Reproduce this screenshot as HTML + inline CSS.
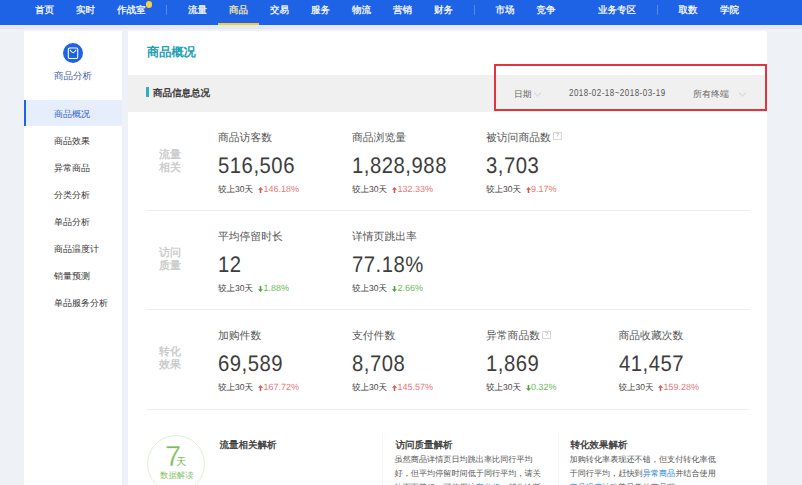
<!DOCTYPE html>
<html><head><meta charset="utf-8">
<style>
*{margin:0;padding:0;box-sizing:border-box}
html,body{width:802px;height:485px;overflow:hidden;background:#eef1f6;font-family:"Liberation Sans",sans-serif;color:#333;text-rendering:geometricPrecision}
.a{position:absolute;white-space:nowrap}
#nav{position:absolute;left:0;top:0;width:802px;height:25px;background:#1e62e6}
#nav .i{position:absolute;top:2.5px;font-size:9.5px;line-height:16px;color:#fff;-webkit-text-stroke:0.25px currentColor}
#nav .sep{position:absolute;top:5px;width:1px;height:10px;background:#5b88e8}
#side{position:absolute;left:24px;top:31px;width:98px;height:460px;background:#fff}
#main{position:absolute;left:128px;top:31px;width:639px;height:460px;background:#fff}
.si{position:absolute;left:0;width:98px;height:27px;font-size:9px;line-height:30px;color:#333;padding-left:30px}
.lbl{font-size:10.8px;line-height:14px;color:#555}
.big{font-size:22.5px;line-height:24px;color:#3d3d3d;letter-spacing:0.6px;transform:scaleX(0.9);transform-origin:0 0}
.cmp{font-size:8.5px;line-height:12px;color:#444}
.pct{font-size:9px;line-height:12px}
.up{color:#e87878}
.dn{color:#6dbd5d}
.grp{font-size:11px;line-height:13px;color:#c8c8c8;-webkit-text-stroke:0.3px #c8c8c8}
.hl{position:absolute;left:146px;width:603px;height:1px;background:#efefef}
.q{position:absolute;width:9px;height:8px;border:1px solid #d8d8d8;font-size:6px;line-height:6px;text-align:center;color:#aaa}
.body{font-size:8.15px;line-height:14.2px;color:#555;white-space:normal;width:150px}
.lk{color:#2e86d8}
.tt{font-size:9.5px;line-height:14px;color:#3a3a3a;-webkit-text-stroke:0.35px #3a3a3a}
</style></head><body>
<div id="nav">
  <span class="i" style="left:35px">首页</span>
  <span class="i" style="left:76px">实时</span>
  <span class="i" style="left:117px">作战室</span>
  <span style="position:absolute;left:146px;top:1.3px;width:6.3px;height:6.3px;border-radius:50%;background:#f5d33f"></span>
  <span class="sep" style="left:166px"></span>
  <span class="i" style="left:188px">流量</span>
  <span class="i" style="left:229px;color:#f6e7a6">商品</span>
  <span style="position:absolute;left:218px;top:23px;width:41px;height:2.5px;background:#f0cc3a"></span>
  <span class="i" style="left:270px">交易</span>
  <span class="i" style="left:311px">服务</span>
  <span class="i" style="left:352px">物流</span>
  <span class="i" style="left:393px">营销</span>
  <span class="i" style="left:434px">财务</span>
  <span class="sep" style="left:474px"></span>
  <span class="i" style="left:495.5px">市场</span>
  <span class="i" style="left:536.5px">竞争</span>
  <span class="i" style="left:598px">业务专区</span>
  <span class="sep" style="left:657px"></span>
  <span class="i" style="left:678.5px">取数</span>
  <span class="i" style="left:720px">学院</span>
</div>

<div class="a" style="left:0;top:25px;width:802px;height:3.5px;background:#e5e8ee"></div>
<div id="side">
  <svg style="position:absolute;left:39px;top:11.5px" width="20" height="21" viewBox="0 0 20 21">
    <circle cx="10" cy="10" r="10" fill="#1e62e6"/>
    <rect x="5.3" y="5" width="9.4" height="10.5" rx="1.2" fill="none" stroke="#fff" stroke-width="1.1"/>
    <path d="M7 6.8 Q10 12.6 13.1 6.8" fill="none" stroke="#fff" stroke-width="1.1"/>
  </svg>
  <div class="a" style="left:30px;top:37.5px;font-size:9.5px;line-height:16px;color:#4662a8">商品分析</div>
  <div class="si" style="top:68.5px;background:#e6eefb;color:#3563c8;border-left:2px solid #1e62e6;padding-left:28px;height:26px;line-height:28.5px">商品概况</div>
  <div class="si" style="top:95px">商品效果</div>
  <div class="si" style="top:122px">异常商品</div>
  <div class="si" style="top:149px">分类分析</div>
  <div class="si" style="top:176px">单品分析</div>
  <div class="si" style="top:203px">商品温度计</div>
  <div class="si" style="top:230px">销量预测</div>
  <div class="si" style="top:257px">单品服务分析</div>
</div>

<div id="main"></div>
<div class="a" style="left:147px;top:43px;font-size:12.2px;line-height:18px;color:#22a0b4;font-weight:bold">商品概况</div>
<div class="a" style="left:128px;top:75px;width:639px;height:37px;background:#f0f0f0"></div>
<div class="a" style="left:146px;top:87px;width:2.5px;height:10px;background:#2ab0c0"></div>
<div class="a tt" style="left:153px;top:87px;color:#333;-webkit-text-stroke:0.35px #333">商品信息总况</div>
<div class="a" style="left:514px;top:86.8px;font-size:8.8px;line-height:14px;color:#666">日期</div>
<svg class="a" style="left:533px;top:92px" width="9" height="5" viewBox="0 0 9 5"><path d="M1 0.8 L4.5 4 L8 0.8" fill="none" stroke="#c8c8c8" stroke-width="0.9"/></svg>
<div class="a" style="left:569px;top:86.5px;font-size:10px;line-height:14px;color:#555;letter-spacing:0.6px;transform:scaleX(0.8);transform-origin:0 0">2018-02-18~2018-03-19</div>
<div class="a" style="left:693px;top:87px;font-size:9px;line-height:14px;color:#666">所有终端</div>
<svg class="a" style="left:738px;top:92px" width="9" height="5" viewBox="0 0 9 5"><path d="M1 0.8 L4.5 4 L8 0.8" fill="none" stroke="#c8c8c8" stroke-width="0.9"/></svg>
<div class="a" style="left:494px;top:64px;width:273px;height:47px;border:2px solid #e2343c"></div>

<!-- row 1 -->
<div class="a grp" style="left:159px;top:148.5px">流量<br>相关</div>
<div class="a lbl" style="left:218px;top:131px">商品访客数</div>
<div class="a big" style="left:218px;top:154px">516,506</div>
<div class="a cmp" style="left:218px;top:183px">较上30天</div>
<div class="a pct up" style="left:258px;top:183px"><svg width="5" height="6" viewBox="0 0 5 6" style="vertical-align:-1px;margin-right:0.5px"><path d="M2.5 0 L5 2.8 L3.3 2.8 L3.3 6 L1.7 6 L1.7 2.8 L0 2.8Z" fill="#e25555"/></svg>146.18%</div>
<div class="a lbl" style="left:352px;top:131px">商品浏览量</div>
<div class="a big" style="left:352px;top:154px">1,828,988</div>
<div class="a cmp" style="left:352px;top:183px">较上30天</div>
<div class="a pct up" style="left:392px;top:183px"><svg width="5" height="6" viewBox="0 0 5 6" style="vertical-align:-1px;margin-right:0.5px"><path d="M2.5 0 L5 2.8 L3.3 2.8 L3.3 6 L1.7 6 L1.7 2.8 L0 2.8Z" fill="#e25555"/></svg>132.33%</div>
<div class="a lbl" style="left:486px;top:131px">被访问商品数</div>
<div class="q" style="left:553px;top:132px">?</div>
<div class="a big" style="left:486px;top:154px">3,703</div>
<div class="a cmp" style="left:486px;top:183px">较上30天</div>
<div class="a pct up" style="left:525.5px;top:183px"><svg width="5" height="6" viewBox="0 0 5 6" style="vertical-align:-1px;margin-right:0.5px"><path d="M2.5 0 L5 2.8 L3.3 2.8 L3.3 6 L1.7 6 L1.7 2.8 L0 2.8Z" fill="#e25555"/></svg>9.17%</div>
<div class="hl" style="top:210px"></div>

<!-- row 2 -->
<div class="a grp" style="left:159px;top:247px">访问<br>质量</div>
<div class="a lbl" style="left:218px;top:230px">平均停留时长</div>
<div class="a big" style="left:218px;top:253px">12</div>
<div class="a cmp" style="left:218px;top:282px">较上30天</div>
<div class="a pct dn" style="left:258px;top:282px"><svg width="5" height="6" viewBox="0 0 5 6" style="vertical-align:-1px;margin-right:0.5px"><path d="M2.5 6 L5 3.2 L3.3 3.2 L3.3 0 L1.7 0 L1.7 3.2 L0 3.2Z" fill="#45a845"/></svg>1.88%</div>
<div class="a lbl" style="left:352px;top:230px">详情页跳出率</div>
<div class="a big" style="left:352px;top:253px">77.18%</div>
<div class="a cmp" style="left:352px;top:282px">较上30天</div>
<div class="a pct dn" style="left:392px;top:282px"><svg width="5" height="6" viewBox="0 0 5 6" style="vertical-align:-1px;margin-right:0.5px"><path d="M2.5 6 L5 3.2 L3.3 3.2 L3.3 0 L1.7 0 L1.7 3.2 L0 3.2Z" fill="#45a845"/></svg>2.66%</div>
<div class="hl" style="top:309px"></div>

<!-- row 3 -->
<div class="a grp" style="left:159px;top:346px">转化<br>效果</div>
<div class="a lbl" style="left:218px;top:329px">加购件数</div>
<div class="a big" style="left:218px;top:352px">69,589</div>
<div class="a cmp" style="left:218px;top:381px">较上30天</div>
<div class="a pct up" style="left:258px;top:381px"><svg width="5" height="6" viewBox="0 0 5 6" style="vertical-align:-1px;margin-right:0.5px"><path d="M2.5 0 L5 2.8 L3.3 2.8 L3.3 6 L1.7 6 L1.7 2.8 L0 2.8Z" fill="#e25555"/></svg>167.72%</div>
<div class="a lbl" style="left:352px;top:329px">支付件数</div>
<div class="a big" style="left:352px;top:352px">8,708</div>
<div class="a cmp" style="left:352px;top:381px">较上30天</div>
<div class="a pct up" style="left:392px;top:381px"><svg width="5" height="6" viewBox="0 0 5 6" style="vertical-align:-1px;margin-right:0.5px"><path d="M2.5 0 L5 2.8 L3.3 2.8 L3.3 6 L1.7 6 L1.7 2.8 L0 2.8Z" fill="#e25555"/></svg>145.57%</div>
<div class="a lbl" style="left:486px;top:329px">异常商品数</div>
<div class="q" style="left:542px;top:331px">?</div>
<div class="a big" style="left:486px;top:352px">1,869</div>
<div class="a cmp" style="left:486px;top:381px">较上30天</div>
<div class="a pct dn" style="left:525.5px;top:381px"><svg width="5" height="6" viewBox="0 0 5 6" style="vertical-align:-1px;margin-right:0.5px"><path d="M2.5 6 L5 3.2 L3.3 3.2 L3.3 0 L1.7 0 L1.7 3.2 L0 3.2Z" fill="#45a845"/></svg>0.32%</div>
<div class="a lbl" style="left:618.5px;top:329px">商品收藏次数</div>
<div class="a big" style="left:618.5px;top:352px">41,457</div>
<div class="a cmp" style="left:618.5px;top:381px">较上30天</div>
<div class="a pct up" style="left:658px;top:381px"><svg width="5" height="6" viewBox="0 0 5 6" style="vertical-align:-1px;margin-right:0.5px"><path d="M2.5 0 L5 2.8 L3.3 2.8 L3.3 6 L1.7 6 L1.7 2.8 L0 2.8Z" fill="#e25555"/></svg>159.28%</div>
<div class="hl" style="top:408.5px"></div>

<!-- bottom -->
<div class="a" style="left:147px;top:434.5px;width:58px;height:58px;border-radius:50%;border:1.3px solid #dfeed4"></div>
<div class="a" style="left:165px;top:442px;font-size:29px;line-height:30px;color:#7cbd58;-webkit-text-stroke:0.35px #fff">7</div>
<div class="a" style="left:176px;top:456px;font-size:10.3px;line-height:14px;color:#7cbd58">天</div>
<div class="a" style="left:160px;top:469px;font-size:8.4px;line-height:13px;color:#86c364">数据解读</div>

<div class="a tt" style="left:219.5px;top:439px">流量相关解析</div>
<div class="a" style="left:381.5px;top:433px;width:1px;height:60px;background:#f6f6f6"></div>
<div class="a tt" style="left:395.5px;top:439px">访问质量解析</div>
<div class="a body" style="left:394.5px;top:453px">虽然商品详情页日均跳出率比同行平均好，但平均停留时间低于同行平均，请关注页面装修，可使用<span class="lk">访客分析</span>，帮你诊断</div>
<div class="a" style="left:557.5px;top:433px;width:1px;height:60px;background:#f6f6f6"></div>
<div class="a tt" style="left:570.5px;top:439px">转化效果解析</div>
<div class="a body" style="left:569.5px;top:453px">加购转化率表现还不错，但支付转化率低于同行平均，赶快到<span class="lk">异常商品</span>并结合使用<span class="lk">商品温度计</span>改善异常的商品吧</div>
</body></html>
